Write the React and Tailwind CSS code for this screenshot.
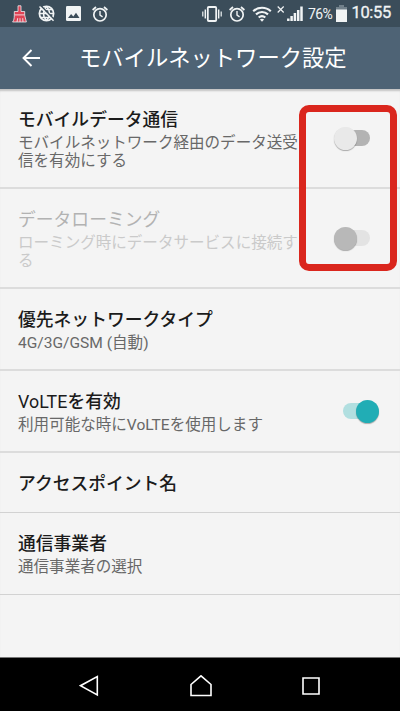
import { useState } from 'react';

const settings = [
  {
    id: 'data',
    title: 'モバイルデータ通信',
    lines: ['モバイルネットワーク経由のデータ送受', '信を有効にする'],
    size: 'h-[100px] border-b-2 border-[#dcdcdc]',
    toggle: true,
  },
  {
    id: 'roaming',
    title: 'データローミング',
    lines: ['ローミング時にデータサービスに接続す', 'る'],
    size: 'h-[100px] border-b-2 border-[#dcdcdc]',
    toggle: true,
    disabled: true,
  },
  {
    id: 'type',
    title: '優先ネットワークタイプ',
    lines: ['4G/3G/GSM (自動)'],
    size: 'h-[82px] border-b-2 border-[#dcdcdc]',
  },
  {
    id: 'volte',
    title: <><span className="font-normal tracking-[0.1px]">VoLTE</span>を有効</>,
    lines: ['利用可能な時にVoLTEを使用します'],
    size: 'h-[82px] border-b-2 border-[#dcdcdc]',
    toggle: true,
  },
  { id: 'apn', title: 'アクセスポイント名', lines: [], size: 'h-[60px] border-b border-[#d2d2d2]' },
  { id: 'carrier', title: '通信事業者', lines: ['通信事業者の選択'], size: 'h-[82px] border-b border-[#d2d2d2]' },
];

const AlarmIcon = ({ className }) => (
  <svg viewBox="0 0 16 16" className={`h-4 w-4 ${className}`} fill="none" stroke="#f1f4f5" strokeWidth="1.7">
    <circle cx="8" cy="8.8" r="6.2" />
    <path d="M8 5v4.2l2.6 1.6" strokeWidth="1.4" />
    <path d="M.6 4 4 1M15.4 4 12 1" />
  </svg>
);

const StatusBar = () => (
  <div className="flex h-[27px] items-center bg-[#3b4d5a] pl-3 pr-[9px] text-[#f1f4f5]">
    <svg viewBox="0 0 15 18" className="h-[18px] w-[15px]">
      <path
        d="M6 .8h3v5.700h3.700v3.700l1.700 6.800H.6c1.300-1.700 1.700-3.600 1.700-6.800V6.500H6z"
        fill="#df4355"
        stroke="#eceff1"
        strokeWidth=".8"
      />
      <path d="M2.500 9.900h10.200" stroke="#f4d5d9" strokeWidth="1" />
      <path d="M5 17l.7-3.800M8 17v-3.800M11 17l-.3-3.800" fill="none" stroke="#eceff1" strokeWidth=".9" />
    </svg>
    <svg viewBox="0 0 17 17" className="ml-[11px] h-[17px] w-[17px]" fill="none" stroke="#f1f4f5">
      <circle cx="8.5" cy="8.5" r="7.1" strokeWidth="1.8" />
      <path d="M8.500 1.500c-4 4-4 10 0 14M8.500 1.500c4 4 4 10 0 14M1.500 8.500h14M3 4.500h11M3 12.500h11" strokeWidth="1.400" />
      <path d="m3.200 1 13 13.500" stroke="#3b4d5a" strokeWidth="1.600" />
      <path d="m1.500 1.500 14 14.200" strokeWidth="1.500" />
    </svg>
    <svg viewBox="0 0 15 15" className="ml-[11px] h-[15px] w-[15px]">
      <rect width="15" height="15" rx="1.3" fill="#f1f4f5" />
      <path d="m2 12 3.100-4 2.200 2.500L10 6.800l3.500 5.200z" fill="#3b4d5a" />
    </svg>
    <AlarmIcon className="ml-[11px]" />
    <svg viewBox="0 0 20 16" className="ml-[94px] h-4 w-5" fill="none" stroke="#f1f4f5">
      <rect x="5.800" y="1" width="8.400" height="14" rx="1" strokeWidth="1.800" />
      <path d="M3.300 3.500v9M16.700 3.500v9" strokeWidth="1.400" />
      <path d="M.8 5.500v5M19.200 5.500v5" strokeWidth="1.200" />
    </svg>
    <AlarmIcon className="ml-[7px]" />
    <svg viewBox="0 0 20 16" className="ml-[7px] h-4 w-5" fill="none" stroke="#f1f4f5" strokeWidth="2.200">
      <path d="M1.200 5.200c5-4.600 12.600-4.600 17.600 0M4 8.400c3.500-3.200 8.500-3.200 12 0M6.700 11.500c2-1.700 4.600-1.700 6.600 0" />
      <path d="M10 15.700 7.900 13.400q2.100-1.500 4.200 0z" fill="#f1f4f5" stroke="none" />
    </svg>
    <svg viewBox="0 0 26 17" className="ml-[5px] h-[17px] w-[26px]" fill="none" stroke="#f1f4f5">
      <path d="m.7 1.500 6 6M6.700 1.500l-6 6" strokeWidth="1.200" />
      <path d="M11.300 16v-2.500M14.600 16v-5M17.900 16V8M21.200 16V5M24.500 16V1.500" strokeWidth="2.500" />
    </svg>
    <span className="ml-[5px] w-[26px] whitespace-nowrap text-[14px] leading-none tracking-[-0.6px]">76%</span>
    <svg viewBox="0 0 11 17" className="ml-[2px] h-[17px] w-[11px]">
      <path d="M3 0h5v2h3v4H0V2h3z" fill="#71808a" />
      <path d="M0 4.500h11V17H0z" fill="#f1f4f5" />
    </svg>
    <span className="ml-auto text-[16.500px] leading-none tracking-[-0.3px] [-webkit-text-stroke:0.3px_#f1f4f5]">10:55</span>
  </div>
);

const Header = () => (
  <div className="flex h-[62px] items-center bg-[#4e6375] pl-[22px] text-white">
    <svg viewBox="0 0 19 18" className="h-[18px] w-[19px]" fill="none" stroke="white" strokeWidth="1.900">
      <path d="M18 9H1.500M9.500 1 1.500 9l8 8" />
    </svg>
    <h1 className="ml-[38px] whitespace-nowrap text-[22.300px] leading-[28px]">モバイルネットワーク設定</h1>
  </div>
);

const Toggle = ({ on, disabled, onChange }) => {
  let track = 'ml-[7px] bg-[#b3b3b3]';
  let thumb = 'left-0 bg-[#e9e9e9]';
  if (disabled) {
    track = 'ml-[7px] bg-[#e3e3e3]';
    thumb = 'left-0 bg-[#b8b8b8]';
  } else if (on) {
    track = 'ml-[9px] bg-[#b1dfe0]';
    thumb = 'right-0 bg-[#21adb5]';
  }
  return (
    <button
      type="button"
      role="switch"
      aria-checked={on}
      disabled={disabled}
      onClick={onChange}
      className="relative flex h-[23px] w-[45px] items-center"
    >
      <span className={`h-4 w-[29px] rounded-full ${track}`} />
      <span className={`absolute top-0 h-[23px] w-[23px] rounded-full shadow-[0_1px_1px_#0000004d] ${thumb}`} />
    </button>
  );
};

const SettingRow = ({ item, on, onToggle }) => (
  <div className={`flex shrink-0 justify-between pl-[18px] ${item.size}`}>
    <div className="whitespace-nowrap pt-[19px]">
      <h2 className={`mb-0.5 text-[17.800px] leading-6 ${item.disabled ? 'text-[#b2b2b2]' : 'font-medium text-[#1b1b1b]'}`}>
        {item.title}
      </h2>
      {item.lines.map((line) => (
        <p key={line} className={`text-[15.550px] leading-[18px] ${item.disabled ? 'text-[#cacaca]' : 'text-[#686868]'}`}>
          {line}
        </p>
      ))}
    </div>
    {item.toggle && (
      <div className="flex items-center pr-[21px]">
        <Toggle on={on} disabled={item.disabled} onChange={onToggle} />
      </div>
    )}
  </div>
);

const NavBar = () => (
  <div className="flex h-[54px] items-center justify-between border-t border-[#777] bg-black pl-[79px] pr-[80px] pt-[3px]">
    <svg viewBox="0 0 20 22" className="h-[22px] w-5" fill="none" stroke="white" strokeWidth="1.600">
      <path d="M18.300 1.500v18.500L1.500 10.700z" />
    </svg>
    <svg viewBox="0 0 22 22" className="h-[22px] w-[22px]" fill="none" stroke="white" strokeWidth="1.600">
      <path d="M1 9.500 11 .8l10 8.700v11H1z" />
    </svg>
    <svg viewBox="0 0 18 18" className="h-[18px] w-[18px]" fill="none" stroke="white" strokeWidth="1.600">
      <path d="M1 1h16v16H1z" />
    </svg>
  </div>
);

export default function App() {
  const [enabled, setEnabled] = useState({ data: false, roaming: false, volte: true });

  const toggle = (id) => setEnabled((prev) => ({ ...prev, [id]: !prev[id] }));

  return (
    <div className="relative flex h-[711px] w-[400px] flex-col overflow-hidden bg-[#f4f4f4] font-[Roboto,'Noto_Sans_CJK_JP',sans-serif]">
      <StatusBar />
      <Header />
      <main className="flex min-h-0 flex-1 flex-col shadow-[inset_0_3px_2px_-1px_#00000033]">
        {settings.map((item) => (
          <SettingRow key={item.id} item={item} on={!!enabled[item.id]} onToggle={() => toggle(item.id)} />
        ))}
      </main>
      <NavBar />
      <div className="pointer-events-none absolute left-[299px] top-[105px] h-[166px] w-[98px] rounded-[10px] border-[7px] border-[#da261d]" />
    </div>
  );
}
